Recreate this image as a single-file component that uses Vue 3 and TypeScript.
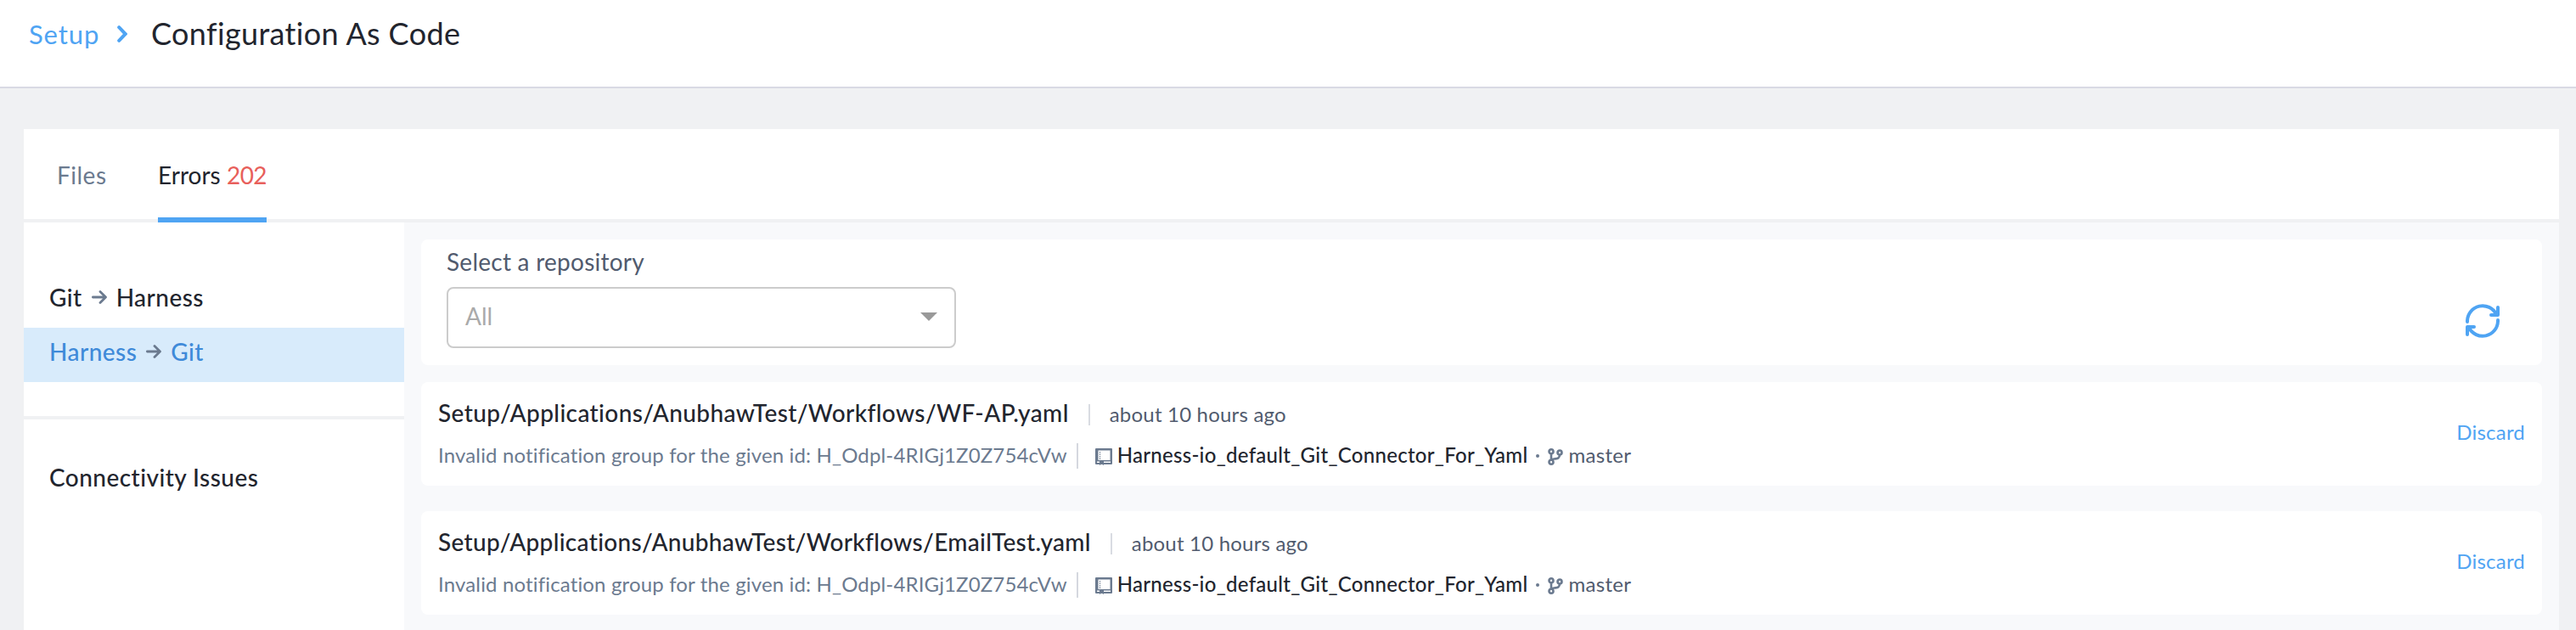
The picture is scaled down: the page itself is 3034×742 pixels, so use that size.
<script setup lang="ts">
interface SyncError {
  path: string
  kind: 'wf' | 'email'
}

const errors: SyncError[] = [
  { path: 'Setup/Applications/AnubhawTest/Workflows/WF-AP.yaml', kind: 'wf' },
  { path: 'Setup/Applications/AnubhawTest/Workflows/EmailTest.yaml', kind: 'email' },
]
</script>

<template>
  <div class="page">
    <header class="topbar">
      <a class="crumb">Setup</a>
      <svg class="chevron" viewBox="0 0 12 20"><path d="M2.200 2.200 9.700 10l-7.500 7.800" /></svg>
      <h1 class="title">Configuration As Code</h1>
    </header>

    <main class="panel">
      <nav class="tabs">
        <a class="tab files">Files</a>
        <a class="tab active"><span class="name">Errors</span><span class="count">202</span></a>
      </nav>
      <div class="body">
        <aside class="sidebar">
          <ul class="directions">
            <li class="item">
              <span>Git</span>
              <svg class="arrow" viewBox="0 0 18 16"><path d="M1.400 8h15M10 1.500 16.500 8l-6.500 6.500" /></svg>
              <span>Harness</span>
            </li>
            <li class="item selected">
              <span>Harness</span>
              <svg class="arrow" viewBox="0 0 18 16"><path d="M1.400 8h15M10 1.500 16.500 8l-6.500 6.500" /></svg>
              <span>Git</span>
            </li>
          </ul>
          <ul class="issues"><li class="item">Connectivity Issues</li></ul>
        </aside>

        <section class="content">
          <div class="card filter">
            <div class="field">
              <label class="label">Select a repository</label>
              <div class="select"><span>All</span><i class="caret"></i></div>
            </div>
            <svg class="refresh" viewBox="0 0 40 40">
              <path d="M2 21v-1.500A18 18 0 0 1 36 12M38 4v9H30" />
              <path d="M38 19v1.500A18 18 0 0 1 4 28M2 36V27H10" />
            </svg>
          </div>

          <article v-for="e in errors" :key="e.path" class="card error">
            <div class="info">
              <div class="headline">
                <span class="path" :class="e.kind">{{ e.path }}</span>
                <span class="ago">about 10 hours ago</span>
              </div>
              <div class="detail">
                <span class="message">Invalid notification group for the given id: H_Odpl-4RIGj1Z0Z754cVw</span>
                <svg class="repo" viewBox="0 0 20 20">
                  <path fill-rule="evenodd" d="M1 0h18a1 1 0 0 1 1 1v17a1 1 0 0 1-1 1H1a1 1 0 0 1-1-1V1a1 1 0 0 1 1-1zM3.500 2.500v11.500h14v-11.500zM2 15.500v1.500h3v-1.500zM10 15.500v1.500h8v-1.500z" />
                  <path class="stitch" d="M5.500 4v9.500" />
                  <path d="M5 16h5v4l-2.500-1.500L5 20z" />
                </svg>
                <span class="connector">Harness-io_default_Git_Connector_For_Yaml</span>
                <i class="dot"></i>
                <svg class="branch" viewBox="0 0 18 20">
                  <circle cx="4" cy="3.800" r="2.500" /><circle cx="4" cy="16.200" r="2.500" /><circle cx="14" cy="5" r="2.500" />
                  <path d="M4 6.300v7.400M14 7.500c0 4.500-3 4.500-6 5-2 .3-4 .5-4 1.500" />
                </svg>
                <span class="ref">master</span>
              </div>
            </div>
            <a class="discard">Discard</a>
          </article>
        </section>
      </div>
    </main>
  </div>
</template>

<style>
body { margin: 0; overflow: hidden; }
</style>

<style scoped>
.page { box-sizing: border-box; height: 742px; overflow: hidden; display: flex; flex-direction: column; background: #f0f1f3; font-family: Lato, "Open Sans", sans-serif; font-size: 28px; color: #22252e; white-space: nowrap; font-variant-ligatures: none; }
svg { display: block; flex: none; }
ul { list-style: none; margin: 0; padding: 0; }

.topbar { box-sizing: border-box; flex: none; height: 104px; padding: 19px 0 0 34px; display: flex; align-items: flex-start; background: #fff; border-bottom: 2px solid #d9dae4; }
.crumb { width: 104px; font-size: 31px; line-height: 43px; letter-spacing: 0.9px; color: #4fa4f3; }
.chevron { width: 12px; height: 20px; margin: 11px 28px 0 0; fill: none; stroke: #4fa4f3; stroke-width: 4; stroke-linecap: round; }
.title { margin: 0; font-size: 36px; line-height: 40px; font-weight: 400; letter-spacing: 0.35px; }

.panel { flex: 1; min-height: 0; margin: 48px 20px 0 28px; display: flex; flex-direction: column; background: #fff; }
.tabs { box-sizing: border-box; flex: none; height: 110px; padding-left: 39px; display: flex; border-bottom: 4px solid #f0f1f3; }
.tab { box-sizing: border-box; height: 110px; padding-top: 4px; line-height: 100px; border-bottom: 6px solid transparent; color: #6b7a8f; }
.tab.files { width: 119px; letter-spacing: 0.5px; }
.tab.active { width: 128px; display: flex; justify-content: space-between; border-color: #4fa4f3; color: #22252e; }
.count { color: #e85f5b; letter-spacing: -0.6px; }

.body { flex: 1; min-height: 0; display: flex; }
.sidebar { flex: none; width: 448px; }
.directions { padding: 60px 0 40px; border-bottom: 4px solid #f0f1f3; }
.issues { padding-top: 40px; }
.item { height: 64px; padding-left: 30px; display: flex; line-height: 56px; font-weight: 500; letter-spacing: 0.45px; }
.item.selected { background: #d8ebfb; color: #3f8ad9; }
.arrow { width: 18px; height: 16px; margin: 20px 11px 0 11px; fill: none; stroke: #6b7a8f; stroke-width: 2.800; stroke-linecap: round; stroke-linejoin: round; }

.content { flex: 1; min-width: 0; padding: 20px; background: #f8f9fb; }
.card { box-sizing: border-box; display: flex; justify-content: space-between; background: #fff; border-radius: 8px; }
.filter { height: 148px; margin-bottom: 20px; padding: 8px 50px 32px 30px; }
.label { display: block; height: 36px; line-height: 36px; margin-bottom: 12px; color: #515b6e; letter-spacing: 0.25px; }
.select { box-sizing: border-box; width: 600px; height: 72px; padding: 0 20px; display: flex; justify-content: space-between; border: 2px solid #ccc; border-radius: 8px; line-height: 64px; color: #aaa; }
.caret { margin-top: 28px; height: 0; border: 10px solid transparent; border-top-color: #999; border-bottom: 0; }
.refresh { align-self: flex-end; width: 40px; height: 40px; fill: none; stroke: #4fa4f3; stroke-width: 4; stroke-linecap: round; stroke-linejoin: round; }

.error { height: 122px; margin-bottom: 30px; padding: 18px 20px 0 20px; }
.headline { display: flex; height: 36px; line-height: 36px; margin-bottom: 18px; align-items: baseline; }
.path { font-weight: 500; letter-spacing: 0.39px; }
.path.email { letter-spacing: 0.32px; }
.ago { position: relative; margin-left: 48px; font-size: 24px; color: #515b6e; letter-spacing: 0.2px; }
.ago::before { content: ""; position: absolute; left: -25px; top: 6px; width: 2px; height: 25px; background: #d9dce2; }
.detail { display: flex; height: 30px; line-height: 27px; font-size: 24px; color: #515b6e; }
.message { padding-right: 11px; border-right: 2px solid #d5d8df; color: #6b7a8f; letter-spacing: 0.15px; }
.repo { width: 20px; height: 20px; margin: 6px 6px 0 20px; fill: #6b7a8f; }
.stitch { fill: none; stroke: #6b7a8f; stroke-width: 1; stroke-dasharray: 1.500 1; }
.connector { font-weight: 500; color: #22252e; letter-spacing: 0.28px; }
.dot { width: 4px; height: 4px; margin: 13px 10px 0 10px; border-radius: 50%; background: #6b7a8f; }
.branch { width: 18px; height: 20px; margin: 6px 6px 0 0; fill: none; stroke: #6b7a8f; stroke-width: 2.600; }
.ref { letter-spacing: 0.3px; }
.discard { padding-top: 27px; height: 30px; font-size: 24px; line-height: 27px; letter-spacing: 0.2px; color: #4fa4f3; }
</style>
